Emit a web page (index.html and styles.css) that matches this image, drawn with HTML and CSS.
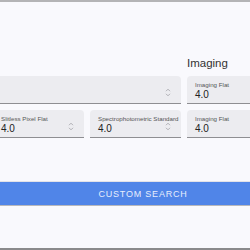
FILE: index.html
```html
<!DOCTYPE html>
<html>
<head>
  <meta charset="UTF-8">
  <title>Calibration search</title>
  <meta name="viewport" content="width=device-width,initial-scale=1.0">
  <link rel="stylesheet" href="styles.css">
</head>
<body>
  <div class="wrap">
    <div class="grid">
      <div class="head">Imaging</div>

      <div class="field wide">
        <span class="label"></span>
        <span class="value"></span>
        <span class="spin"><svg width="6" height="9" viewBox="0 0 6 9"><path d="M1 3.2 3 1.2 5 3.2M1 5.8 3 7.8 5 5.8" fill="none" stroke="#a8a8ae" stroke-width=".9"/></svg></span>
      </div>
      <div class="field">
        <span class="label">Imaging Flat</span>
        <span class="value">4.0</span>
      </div>

      <div class="field">
        <span class="label">Slitless Pixel Flat</span>
        <span class="value">4.0</span>
        <span class="spin"><svg width="6" height="9" viewBox="0 0 6 9"><path d="M1 3.2 3 1.2 5 3.2M1 5.8 3 7.8 5 5.8" fill="none" stroke="#a8a8ae" stroke-width=".9"/></svg></span>
      </div>
      <div class="field">
        <span class="label">Spectrophotometric Standard</span>
        <span class="value">4.0</span>
        <span class="spin"><svg width="6" height="9" viewBox="0 0 6 9"><path d="M1 3.2 3 1.2 5 3.2M1 5.8 3 7.8 5 5.8" fill="none" stroke="#a8a8ae" stroke-width=".9"/></svg></span>
      </div>
      <div class="field">
        <span class="label">Imaging Flat</span>
        <span class="value">4.0</span>
      </div>
    </div>

    <button class="search">CUSTOM SEARCH</button>
  </div>
</body>
</html>
```

FILE: styles.css
```css
html,body{margin:0;height:100%;}
body{
  background:#f9f9fd;color:#222;
  font-family:"Liberation Sans",Arial,sans-serif;
  border-top:2px solid #b4b4b6;border-bottom:2px solid #8a8a8c;
  box-sizing:border-box;overflow:hidden;
}

.wrap{width:300px;margin-left:-7px;padding-top:54px;}

/* fields */
.grid{display:grid;grid-template-columns:91px 91px 91px;column-gap:6px;row-gap:6px;}
.head{grid-column:3;font-size:11.5px;line-height:14px;color:#333;}

.field{
  position:relative;height:28px;box-sizing:border-box;
  background:#ececf0;border-radius:4px 4px 0 0;
  border-bottom:1px solid #8e8e92;
  padding:5px 4px 0 8px;display:flex;flex-direction:column;
}
.field.wide{grid-column:1 / span 2;}
.label{font-size:6.2px;line-height:8px;color:#555;white-space:nowrap;}
.value{font-size:10px;line-height:11px;color:#222;}
.spin{position:absolute;right:10px;top:12px;line-height:0;}

/* button */
.search{
  display:block;width:100%;height:23px;margin-top:44px;
  background:#5085e8;color:#e6edfc;border:0;
  box-shadow:0 -1px 0 #e2e2e8,0 1px 0 #b8b8bc;
  font-family:"Liberation Sans",Arial,sans-serif;
  font-size:9px;letter-spacing:.8px;
}
```
